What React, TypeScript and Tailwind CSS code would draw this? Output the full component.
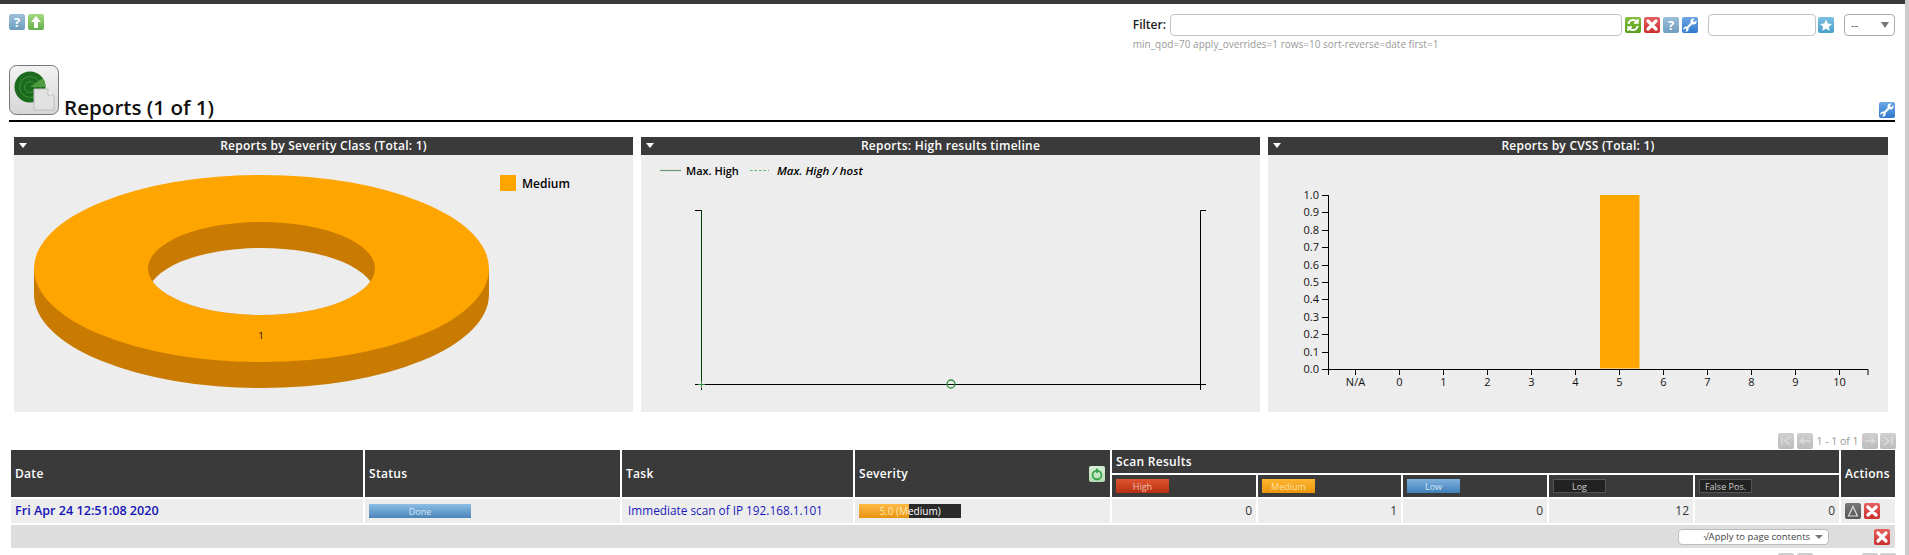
/**
 * Reports page - filter bar, three summary charts and the reports table
 */

import React from 'react';

const FONT = '"Open Sans", "Noto Sans", sans-serif';

type GlyphName = 'help' | 'up' | 'refresh' | 'close' | 'wrench' | 'star' | 'delta' | 'first' | 'prev' | 'next' | 'last' | 'power';

const ICON_BG: Record<GlyphName, [string, string]> = {
  help: ['#9cc0da', '#6f9dbd'],
  up: ['#a5d97e', '#62b04a'],
  refresh: ['#84bf3c', '#5a9e1c'],
  close: ['#e86060', '#c92f2f'],
  wrench: ['#6ea8e6', '#2f78cc'],
  star: ['#7cc0e2', '#4a9fcc'],
  delta: ['#777777', '#555555'],
  first: ['#cfcfcf', '#bcbcbc'],
  prev: ['#cfcfcf', '#bcbcbc'],
  next: ['#cfcfcf', '#bcbcbc'],
  last: ['#cfcfcf', '#bcbcbc'],
  power: ['#d6efd6', '#b2dcb2'],
};

const Glyph: React.FC<{ name: GlyphName }> = ({ name }) => {
  switch (name) {
    case 'help':
      return <text x="8" y="13" textAnchor="middle" fontSize="13" fontWeight="700" fill="#fff" fontFamily={FONT}>?</text>;
    case 'up':
      return <path d="M8 2 L13 8 H10 V14 H6 V8 H3 Z" fill="#fff" />;
    case 'refresh':
      return (
        <g fill="none" stroke="#fff" strokeWidth="2">
          <path d="M3.5 7 A4.6 4.6 0 0 1 11.5 4.5" />
          <path d="M12.5 9 A4.6 4.6 0 0 1 4.5 11.5" />
          <path d="M13 2 V6 H9" strokeWidth="1.4" fill="#fff" />
          <path d="M3 14 V10 H7" strokeWidth="1.4" fill="#fff" />
        </g>
      );
    case 'close':
      return <path d="M4 4 L12 12 M12 4 L4 12" stroke="#fff" strokeWidth="3.2" strokeLinecap="round" />;
    case 'wrench':
      return (
        <g>
          <path d="M4 12 L11 5" stroke="#fff" strokeWidth="2.2" />
          <circle cx="11.5" cy="4.5" r="3" fill="#fff" />
          <path d="M11.5 4.5 L15 1" stroke="#5f9de0" strokeWidth="2.2" />
          <circle cx="4" cy="12" r="2.6" fill="#fff" />
          <path d="M4 12 L1 15" stroke="#3a80d0" strokeWidth="1.8" />
        </g>
      );
    case 'star':
      return <path d="M8 2.5 L9.8 6.4 L14 6.9 L10.9 9.7 L11.8 13.8 L8 11.7 L4.2 13.8 L5.1 9.7 L2 6.9 L6.2 6.4 Z" fill="#fff" />;
    case 'delta':
      return <path d="M8 3.5 L12.5 13 H3.5 Z" fill="none" stroke="#ddd" strokeWidth="1.2" />;
    case 'first':
      return <path d="M4 4 V12 M12 4 L7 8 L12 12" fill="none" stroke="#dcdcdc" strokeWidth="1.4" />;
    case 'prev':
      return <path d="M3 8 H13 M7 5 L3 8 L7 11" fill="none" stroke="#dcdcdc" strokeWidth="1.4" />;
    case 'next':
      return <path d="M3 8 H13 M9 5 L13 8 L9 11" fill="none" stroke="#dcdcdc" strokeWidth="1.4" />;
    case 'last':
      return <path d="M12 4 V12 M4 4 L9 8 L4 12" fill="none" stroke="#dcdcdc" strokeWidth="1.4" />;
    case 'power':
      return (
        <g fill="none" stroke="#2f9e3f" strokeWidth="1.6">
          <circle cx="8" cy="9" r="4.4" />
          <path d="M8 2.5 V7" />
        </g>
      );
  }
};

const Icon: React.FC<{ name: GlyphName; className?: string }> = ({ name, className }) => {
  const id = `bg-${name}`;
  return (
    <svg width="16" height="16" viewBox="0 0 16 16" className={`shrink-0 ${className ?? ''}`}>
      <defs>
        <linearGradient id={id} x1="0" y1="0" x2="0" y2="1">
          <stop offset="0" stopColor={ICON_BG[name][0]} />
          <stop offset="1" stopColor={ICON_BG[name][1]} />
        </linearGradient>
      </defs>
      <rect width="16" height="16" rx="2" fill={`url(#${id})`} />
      <Glyph name={name} />
    </svg>
  );
};

const RadarIcon: React.FC = () => (
  <svg width="50" height="50" viewBox="0 0 50 50" className="shrink-0">
    <defs>
      <linearGradient id="radar-bg" x1="0" y1="0" x2="0" y2="1">
        <stop offset="0" stopColor="#f2f2f2" />
        <stop offset="1" stopColor="#d6d6d6" />
      </linearGradient>
    </defs>
    <rect x="0.5" y="0.5" width="49" height="49" rx="7" fill="url(#radar-bg)" stroke="#777" />
    <circle cx="21" cy="22" r="15.5" fill="#1c6a1e" />
    <circle cx="21" cy="22" r="10.5" fill="none" stroke="#3f8f3c" strokeWidth="1" />
    <circle cx="21" cy="22" r="5.5" fill="none" stroke="#3f8f3c" strokeWidth="1" />
    <path d="M21 22 L34 13 A15.5 15.5 0 0 1 36.5 22 Z" fill="#4f9c40" />
    <path d="M25 24 H39 L45 30 V45 H25 Z" fill="#e2e2e2" stroke="#bcbcbc" />
    <path d="M39 24 V30 H45" fill="#f4f4f4" stroke="#bcbcbc" />
  </svg>
);

const PanelHeader: React.FC<{ title: string }> = ({ title }) => (
  <div className="relative h-[18px] bg-[#3a3a3a] text-center text-[12px] font-semibold leading-[18px] tracking-[0.25px] text-white">
    <span className="absolute left-[5px] top-[6px] h-0 w-0 border-x-[4.5px] border-t-[5px] border-x-transparent border-t-white" />
    {title}
  </div>
);

const Panel: React.FC<{ title: string; children: React.ReactNode }> = ({ title, children }) => (
  <div className="h-[275px] bg-[#ededed]">
    <PanelHeader title={title} />
    {children}
  </div>
);

const DonutChart: React.FC = () => (
  <svg width="619" height="257" viewBox="0 0 619 257" className="block">
    <defs>
      <clipPath id="donut-hole">
        <ellipse cx="247.5" cy="113.5" rx="113.5" ry="46.5" />
      </clipPath>
    </defs>
    <path d="M20 113.5 V139.5 A227.5 93.5 0 0 0 475 139.5 V113.5 Z" fill="#c87b00" />
    <ellipse cx="247.5" cy="113.5" rx="227.5" ry="93.5" fill="#ffa500" />
    <ellipse cx="247.5" cy="113.5" rx="113.5" ry="46.5" fill="#c87b00" />
    <ellipse cx="247.5" cy="139.5" rx="113.5" ry="46.5" fill="#ededed" clipPath="url(#donut-hole)" />
    <text x="247" y="184" textAnchor="middle" fontSize="9" fill="#000" fontFamily={FONT}>1</text>
    <rect x="486" y="20" width="16" height="16" fill="#ffa500" />
    <text x="508" y="33" fontSize="12" fontWeight="600" fill="#000" fontFamily={FONT}>Medium</text>
  </svg>
);

const TimelineChart: React.FC = () => (
  <svg width="619" height="257" viewBox="0 0 619 257" className="block">
    <path d="M19 15.5 H40" stroke="#6f9a6f" strokeWidth="1.2" />
    <text x="45" y="20" fontSize="11" fontWeight="600" fill="#000" fontFamily={FONT}>Max. High</text>
    <path d="M109 15.5 H128" stroke="#55bb66" strokeWidth="1.2" strokeDasharray="2.5 2" />
    <text x="136" y="20" fontSize="11.5" fontWeight="600" fontStyle="italic" fill="#000" fontFamily={FONT}>Max. High / host</text>
    <g fill="none" stroke="#000" strokeWidth="1">
      <path d="M54 55.5 H60.5 V229.5 M60.5 229.5 V235" />
      <path d="M565 55.5 H559.5 V229.5 V235" />
      <path d="M54 229.5 H565" />
    </g>
    <path d="M60.5 55.5 V229.5" stroke="#063d06" strokeWidth="1" />
    <path d="M57 229.5 H64 M60.5 226 V233" stroke="#2f8f3f" strokeWidth="1" />
    <circle cx="310" cy="229" r="4" fill="none" stroke="#2f8f3f" strokeWidth="1.3" />
  </svg>
);

const CVSS_TICKS = ['1.0', '0.9', '0.8', '0.7', '0.6', '0.5', '0.4', '0.3', '0.2', '0.1', '0.0'];
const CVSS_LABELS = ['N/A', '0', '1', '2', '3', '4', '5', '6', '7', '8', '9', '10'];

const CvssChart: React.FC = () => (
  <svg width="620" height="257" viewBox="0 0 620 257" className="block">
    <rect x="332" y="40" width="39.5" height="173.5" fill="#ffa500" />
    <g fill="none" stroke="#000" strokeWidth="1">
      <path d="M60.5 40 V214.5 H600 V220" />
      <path d="M60.5 214.5 V220" />
      {CVSS_TICKS.map((_, i) => (
        <path key={i} d={`M54 ${Math.round(40 + i * 17.4) + 0.5} H60.5`} />
      ))}
      {CVSS_LABELS.map((_, i) => (
        <path key={i} d={`M${Math.round(87 + i * 44) + 0.5} 214.5 V220`} />
      ))}
    </g>
    {CVSS_TICKS.map((t, i) => (
      <text key={t} x="51" y={44 + i * 17.4} textAnchor="end" fontSize="11" fill="#111" fontFamily={FONT}>{t}</text>
    ))}
    {CVSS_LABELS.map((l, i) => (
      <text key={l} x={87.5 + i * 44} y="231" textAnchor="middle" fontSize="11" fill="#111" fontFamily={FONT}>{l}</text>
    ))}
  </svg>
);

const Pagination: React.FC<{ count?: boolean }> = ({ count = true }) => (
  <div className="flex h-[15px] items-start justify-end pr-[9px] text-[10.5px] leading-[16px] text-[#999]">
    <Icon name="first" />
    <Icon name="prev" className="ml-[3px]" />
    <span className="w-[49px] whitespace-nowrap text-center">{count ? '1 - 1 of 1' : ''}</span>
    <Icon name="next" />
    <Icon name="last" className="ml-[2px]" />
  </div>
);

const Bar: React.FC<{ className: string; label: string; width?: string }> = ({ className, label, width = 'w-[53px]' }) => (
  <div className={`flex h-[14px] items-center justify-center text-[9px] leading-none ${width} ${className}`}>
    {label}
  </div>
);

const TH = 'bg-[#3a3a3a] px-[4px] text-left align-middle text-[12px] font-semibold tracking-[0.3px] text-white';
const SUB = 'h-[22px] bg-[#3a3a3a] px-[4px] align-middle';
const TD = 'h-[24px] bg-[#ededed] px-[4px] align-middle';
const NUM = `${TD} text-right text-[12px] text-[#333]`;

export default function App() {
  return (
    <div className="flex h-[555px] w-[1909px] overflow-hidden bg-white" style={{ fontFamily: FONT }}>
      <div className="w-[1905px] shrink-0">
        <div className="h-1 bg-[#3a3a3a]" />

        {/* toolbar */}
        <div className="flex h-[61px] justify-between pl-[9px] pr-[10px] pt-[10px]">
          <div className="flex gap-[3px]">
            <Icon name="help" />
            <Icon name="up" />
          </div>
          <div className="flex flex-col">
            <div className="flex items-start">
              <span className="mr-[4px] mt-[3px] text-[12px] font-semibold leading-[16px] text-[#222]">Filter:</span>
              <div className="h-[22px] w-[452px] rounded-[4px] border border-[#c4c4c4] bg-white" />
              <div className="ml-[3px] mt-[3px] flex gap-[3px]">
                <Icon name="refresh" />
                <Icon name="close" />
                <Icon name="help" />
                <Icon name="wrench" />
              </div>
              <div className="ml-[10px] h-[22px] w-[108px] rounded-[4px] border border-[#c4c4c4] bg-white" />
              <Icon name="star" className="ml-[2px] mt-[3px]" />
              <div className="ml-[10px] flex h-[22px] w-[51px] items-center justify-between rounded-[4px] border border-[#aaa] bg-white pl-[6px] pr-[5px] text-[11px] text-[#555]">
                <span>--</span>
                <span className="h-0 w-0 border-x-[4px] border-t-[6px] border-x-transparent border-t-[#777]" />
              </div>
            </div>
            <div className="mt-[1px] text-[10px] leading-[14px] text-[#999]">
              min_qod=70 apply_overrides=1 rows=10 sort-reverse=date first=1
            </div>
          </div>
        </div>

        {/* section title */}
        <div className="ml-[9px] flex h-[57px] w-[1886px] items-start justify-between border-b-2 border-black">
          <div className="flex items-start">
            <RadarIcon />
            <h1 className="ml-[5px] mt-[29px] whitespace-nowrap text-[20.6px] font-semibold leading-[27px] text-[#111]">Reports (1 of 1)</h1>
          </div>
          <Icon name="wrench" className="mt-[37px]" />
        </div>

        {/* charts */}
        <div className="ml-[14px] mt-[15px] grid w-[1874px] grid-cols-[619px_619px_620px] gap-2">
          <Panel title="Reports by Severity Class (Total: 1)">
            <DonutChart />
          </Panel>
          <Panel title="Reports: High results timeline">
            <TimelineChart />
          </Panel>
          <Panel title="Reports by CVSS (Total: 1)">
            <CvssChart />
          </Panel>
        </div>

        <div className="mt-[21px]">
          <Pagination />
        </div>

        {/* reports table */}
        <table className="ml-[9px] w-[1888px] table-fixed border-separate border-spacing-[2px]">
          <colgroup>
            <col className="w-[352px]" />
            <col className="w-[255px]" />
            <col className="w-[231px]" />
            <col className="w-[255px]" />
            <col className="w-[144px]" />
            <col className="w-[143px]" />
            <col className="w-[144px]" />
            <col className="w-[144px]" />
            <col className="w-[144px]" />
            <col className="w-[54px]" />
          </colgroup>
          <thead>
            <tr>
              <th rowSpan={2} className={TH}>Date</th>
              <th rowSpan={2} className={TH}>Status</th>
              <th rowSpan={2} className={TH}>Task</th>
              <th rowSpan={2} className={TH}>
                <div className="flex items-center justify-between pr-[1px]">
                  <span>Severity</span>
                  <Icon name="power" />
                </div>
              </th>
              <th colSpan={5} className={`${TH} h-[23px]`}>Scan Results</th>
              <th rowSpan={2} className={TH}>Actions</th>
            </tr>
            <tr>
              <th className={SUB}>
                <Bar label="High" className="bg-gradient-to-b from-[#e0552f] to-[#b52f12] font-normal text-[#f4c0b0]" />
              </th>
              <th className={SUB}>
                <Bar label="Medium" className="bg-gradient-to-b from-[#ffb52e] to-[#eb960a] font-normal text-[#ffe0a0]" />
              </th>
              <th className={SUB}>
                <Bar label="Low" className="bg-gradient-to-b from-[#7fb2e0] to-[#3f7fb8] font-normal text-[#d4e8f8]" />
              </th>
              <th className={SUB}>
                <Bar label="Log" className="border border-[#555] bg-[#222] font-normal text-[#ccc]" />
              </th>
              <th className={SUB}>
                <Bar label="False Pos." className="border border-[#555] bg-[#222] font-normal text-[#ccc]" />
              </th>
            </tr>
          </thead>
          <tbody>
            <tr>
              <td className={`${TD} text-[12.6px] font-semibold text-[#1414b4]`}>Fri Apr 24 12:51:08 2020</td>
              <td className={TD}>
                <Bar
                  label="Done"
                  width="w-[102px]"
                  className="bg-gradient-to-b from-[#8cbde6] to-[#4a85b8] text-[#d4e8f8]"
                />
              </td>
              <td className={`${TD} pl-[6px] text-[11.8px] text-[#1a1ab8]`}>Immediate scan of IP 192.168.1.101</td>
              <td className={TD}>
                <div className="relative flex h-[14px] w-[102px] items-center justify-center bg-[#2a2a2a] text-[10px] leading-none text-white">
                  <div className="absolute inset-y-0 left-0 w-[50px] bg-gradient-to-b from-[#ffbb44] to-[#e8940a]" />
                  <span className="relative">
                    <span className="text-[#ffe6b0]">5.0 (M</span>edium)
                  </span>
                </div>
              </td>
              <td className={NUM}>0</td>
              <td className={NUM}>1</td>
              <td className={NUM}>0</td>
              <td className={NUM}>12</td>
              <td className={NUM}>0</td>
              <td className={TD}>
                <div className="flex gap-[3px]">
                  <Icon name="delta" />
                  <Icon name="close" />
                </div>
              </td>
            </tr>
            <tr>
              <td colSpan={10} className="h-[23px] bg-[#dddddd] px-0 align-middle">
                <div className="flex items-center justify-end pr-[5px]">
                  <div className="flex h-[16px] w-[151px] items-center justify-end rounded-[4px] border border-[#bbb] bg-white pr-[5px] text-[9.5px] leading-none text-[#444]">
                    √Apply to page contents
                    <span className="ml-[5px] h-0 w-0 border-x-[4px] border-t-[4px] border-x-transparent border-t-[#777]" />
                  </div>
                  <Icon name="close" className="ml-[45px]" />
                </div>
              </td>
            </tr>
          </tbody>
        </table>

        <div className="mt-[3px]">
          <Pagination count={false} />
        </div>
      </div>
      <div className="w-1 bg-[#cccccc]" />
    </div>
  );
}
